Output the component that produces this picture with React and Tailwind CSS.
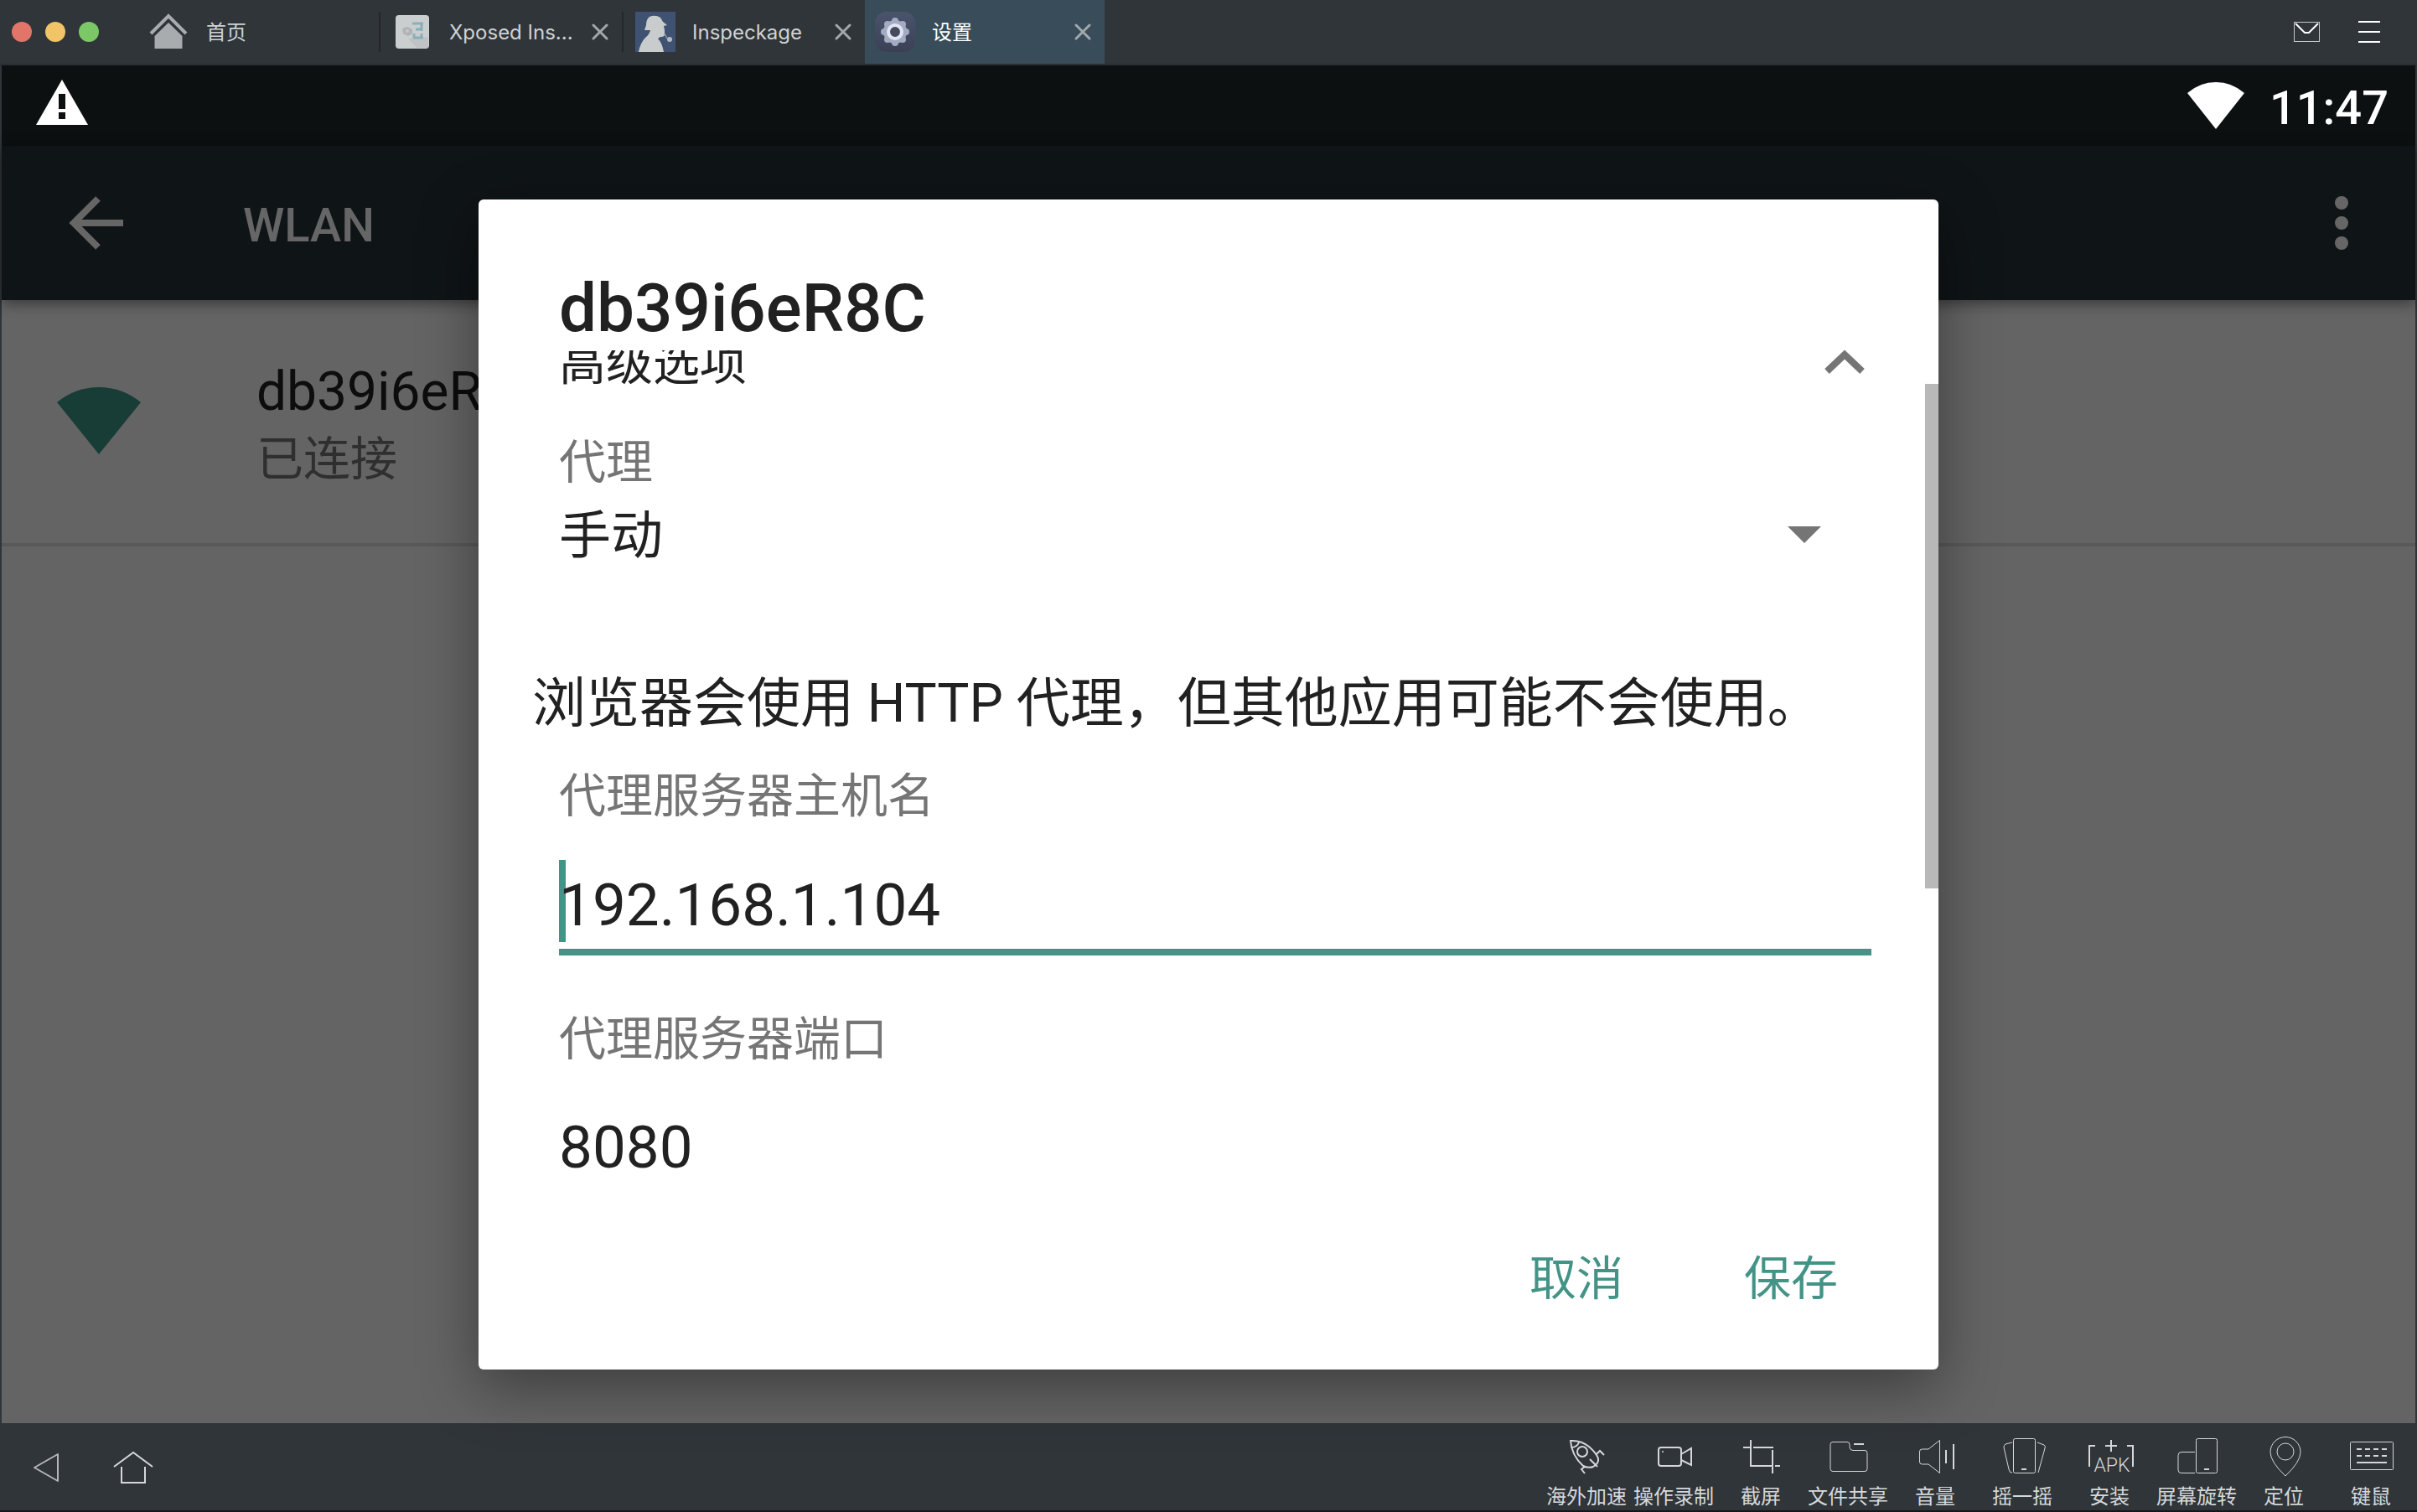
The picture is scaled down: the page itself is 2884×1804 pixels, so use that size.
import React, { useState } from "react";

const uiFont = "font-['Inter','Noto_Sans_CJK_SC',sans-serif]";
const androidFont = "font-['Roboto','Noto_Sans_CJK_SC',sans-serif]";

function CloseIcon() {
  return (
    <svg className="size-5" viewBox="0 0 20 20" fill="none" stroke="currentColor" strokeWidth="3" strokeLinecap="round">
      <path d="M2 2l16 16M18 2L2 18" />
    </svg>
  );
}

function XposedIcon() {
  return (
    <svg className="size-12" viewBox="0 0 48 48">
      <rect x="4" y="4" width="40" height="40" rx="4" fill="#cbcecf" />
      <path d="M19 32l10 11h14V30z" fill="#c0c3c5" />
      <path d="M24 14h13M35 14v9M28 21h8M26 26v6M25 31h12M35 26v6" fill="none" stroke="#88b0b8" strokeWidth="3" />
      <path d="M12 20l6-2 6 3v5l-5 3-6-3z" fill="#b0b3b5" />
      <circle cx="18" cy="23" r="2" fill="#c6c9ca" />
    </svg>
  );
}

function InspeckageIcon() {
  return (
    <svg className="size-12" viewBox="0 0 48 48">
      <rect width="48" height="48" fill="#405272" />
      <path
        d="M17 6q7-3 13 1l3 5 5 4-4 1 1 5v6q-1 2-5 2l-3 2q5 5 7 16H4q2-11 8-17 5-4 6-9h-7l2-6q0-7 4-10z"
        fill="#c9cccd"
      />
      <path d="M35 26l3 6" stroke="#8b95a4" strokeWidth="1.500" />
      <circle cx="41" cy="33" r="3" fill="#b4bac2" />
    </svg>
  );
}

function SettingsIcon() {
  return (
    <svg className="size-12" viewBox="0 0 48 48">
      <defs>
        <linearGradient id="settings-bg" x1="0" y1="0" x2="0" y2="1">
          <stop offset="0" stopColor="#49546d" />
          <stop offset="1" stopColor="#3c4054" />
        </linearGradient>
      </defs>
      <rect width="48" height="48" rx="14" fill="url(#settings-bg)" />
      <g fill="#a3abc4">
        <circle cx="24" cy="24" r="14" />
        <circle cx="24" cy="11" r="4" />
        <circle cx="24" cy="37" r="4" />
        <circle cx="11" cy="24" r="4" />
        <circle cx="37" cy="24" r="4" />
        <circle cx="15" cy="15" r="4" />
        <circle cx="33" cy="15" r="4" />
        <circle cx="15" cy="33" r="4" />
        <circle cx="33" cy="33" r="4" />
      </g>
      <circle cx="24" cy="24" r="8" fill="#454a60" stroke="#e1e5f0" strokeWidth="4" />
    </svg>
  );
}

function Tab({ icon, label, active }) {
  return (
    <div className={`flex items-center ${active ? "w-[286px] bg-[#384d59] text-white" : "w-[290px] text-[#cfd2d4]"}`}>
      {!active && <div className="h-12 w-0.5 bg-[#23272b]" />}
      <button
        type="button"
        className={`flex flex-1 items-center gap-5 text-left whitespace-nowrap ${active ? "ml-3" : "ml-3.5"}`}
      >
        {icon}
        <span className="pt-0.5">{label}</span>
      </button>
      <button type="button" aria-label={`关闭 ${label}`} className="mr-4 text-[#a3a8ac]">
        <CloseIcon />
      </button>
    </div>
  );
}

function TitleBar() {
  return (
    <header className={`flex h-[78px] items-stretch border-b-2 border-[#2b2f33] bg-[#303539] text-2xl ${uiFont}`}>
      <div className="flex w-[164px] items-center gap-4 pl-3.5">
        <button type="button" aria-label="关闭窗口" className="size-6 rounded-full bg-[#e2756a]" />
        <button type="button" aria-label="最小化" className="size-6 rounded-full bg-[#f1c467]" />
        <button type="button" aria-label="最大化" className="size-6 rounded-full bg-[#7cc867]" />
      </div>
      <button type="button" className="flex w-[288px] items-center gap-5 pl-3 text-[#cfd2d4]">
        <svg className="size-[50px]" viewBox="0 0 50 50">
          <path d="M4 27L25 6l21 21" fill="none" stroke="#a9acae" strokeWidth="4" />
          <path d="M25 14L41.500 30V45h-33V30z" fill="#a9acae" />
        </svg>
        <span className="pt-0.5">首页</span>
      </button>
      <Tab icon={<XposedIcon />} label="Xposed Ins..." />
      <Tab icon={<InspeckageIcon />} label="Inspeckage" />
      <Tab active icon={<SettingsIcon />} label="设置" />
      <div className="ml-auto flex items-center gap-[46px] pr-11">
        <button type="button" aria-label="消息">
          <svg className="h-6 w-[31px]" viewBox="0 0 31 24" fill="none">
            <rect x="0.500" y="0.500" width="30" height="23" stroke="#c3c7ca" />
            <path d="M2 2l11 11h5L29 2" stroke="#fff" strokeWidth="2" />
          </svg>
        </button>
        <button type="button" aria-label="菜单">
          <svg className="size-[26px]" viewBox="0 0 26 26" stroke="#fff" strokeWidth="2">
            <path d="M0 1h26M0 13h26M0 25h26" />
          </svg>
        </button>
      </div>
    </header>
  );
}

function StatusBar() {
  return (
    <div className="flex h-24 items-center bg-[#0c1011] pr-8 pl-10 text-white">
      <svg className="mb-2 h-[54px] w-16" viewBox="0 0 64 54">
        <path d="M32 0l31 54H1z" fill="#fff" />
        <path d="M28 17h8v18h-8zM28 39h8v8h-8z" fill="#0c1011" />
      </svg>
      <svg className="mr-[30px] ml-auto h-14 w-[68px]" viewBox="0 0 68 56">
        <path d="M0 13Q15 0 34 0t34 13L34 56z" fill="#fff" />
      </svg>
      <span className="mt-1.5 text-[56px] leading-16 font-medium">11:47</span>
    </div>
  );
}

function WlanPage() {
  return (
    <>
      <div className="relative flex h-[184px] items-center bg-[#263238] pr-20 pl-[78px] text-white shadow-[0_4px_16px_rgba(0,0,0,0.45)]">
        <button type="button" aria-label="返回">
          <svg className="size-[72px]" viewBox="0 0 72 72" fill="none" stroke="currentColor" strokeWidth="8">
            <path d="M37 7L8 36l29 29M7 36h60" />
          </svg>
        </button>
        <h1 className="ml-[138px] pt-1.5 text-[56px] leading-16 font-medium">WLAN</h1>
        <button type="button" aria-label="更多选项" className="ml-auto">
          <svg className="h-16 w-4" viewBox="0 0 16 64" fill="currentColor">
            <circle cx="8" cy="8" r="8" />
            <circle cx="8" cy="32" r="8" />
            <circle cx="8" cy="56" r="8" />
          </svg>
        </button>
      </div>
      <div className="flex h-[294px] items-start border-b-4 border-[#dedede] pt-[70px] pl-[66px]">
        <svg className="mt-[34px] h-20 w-[100px]" viewBox="0 0 100 80">
          <path d="M0 18Q22 0 50 0t50 18L50 80z" fill="#3c9688" />
        </svg>
        <div className="ml-[138px]">
          <p className="text-[64px] leading-20 text-[#212121]">db39i6eR8C</p>
          <p className="text-[56px] leading-20 text-[#757575]">已连接</p>
        </div>
      </div>
    </>
  );
}

function ProxyDialog() {
  const [mode, setMode] = useState("manual");
  const [host, setHost] = useState("192.168.1.104");
  const [port, setPort] = useState("8080");
  const label = "block text-[56px] leading-16 text-[#757575]";
  return (
    <div
      role="dialog"
      aria-labelledby="dialog-title"
      className="w-full max-w-[1742px] rounded-md bg-white pt-20 text-[#212121] shadow-[0_20px_70px_rgba(0,0,0,0.4)]"
    >
      <h2 id="dialog-title" className="px-24 text-[80px] leading-[100px] font-medium">
        db39i6eR8C
      </h2>
      <form id="proxy-form" className="relative overflow-hidden pr-20 pl-24">
        <button type="button" className="-mt-4 flex w-full items-center justify-between text-[56px] leading-16">
          <span>高级选项</span>
          <svg className="mr-2 mb-1 h-7 w-12" viewBox="0 0 48 28" fill="none" stroke="#757575" strokeWidth="8">
            <path d="M3 25L24 5l21 20" />
          </svg>
        </button>
        <label htmlFor="proxy-mode" className={`mt-[54px] ${label}`}>
          代理
        </label>
        <div className="relative mt-4">
          <select
            id="proxy-mode"
            value={mode}
            onChange={(e) => setMode(e.target.value)}
            className="block h-20 w-full appearance-none bg-transparent text-[62px] leading-20 outline-none"
          >
            <option value="manual">手动</option>
            <option value="none">无</option>
          </select>
          <svg className="pointer-events-none absolute top-7 right-[60px] h-5 w-10" viewBox="0 0 40 20">
            <path d="M0 0h40L20 20z" fill="#757575" />
          </svg>
        </div>
        <p className="mt-30 -ml-8 text-[64px] leading-20">浏览器会使用 HTTP 代理，但其他应用可能不会使用。</p>
        <label htmlFor="proxy-host" className={`mt-[38px] ${label}`}>
          代理服务器主机名
        </label>
        <div className="relative mt-11">
          <div className="absolute top-0 left-0 h-[98px] w-2 bg-[#439386]" />
          <input
            id="proxy-host"
            value={host}
            onChange={(e) => setHost(e.target.value)}
            className="relative block h-[114px] w-full border-b-8 border-[#439386] bg-transparent text-[71px] outline-none"
          />
        </div>
        <label htmlFor="proxy-port" className={`mt-[68px] ${label}`}>
          代理服务器端口
        </label>
        <input
          id="proxy-port"
          value={port}
          onChange={(e) => setPort(e.target.value)}
          className="mt-11 block h-[106px] w-full bg-transparent text-[71px] outline-none"
        />
        <div className="absolute top-10 right-0 h-[602px] w-4 bg-[#b8b8b8]" />
      </form>
      <div className="flex h-[212px] items-center justify-end gap-16 pr-20 pb-1 text-[56px] leading-20 text-[#439386]">
        <button type="button" className="px-10">
          取消
        </button>
        <button type="submit" form="proxy-form" className="px-10">
          保存
        </button>
      </div>
    </div>
  );
}

const tools = [
  {
    label: "海外加速",
    icon: (
      <g strokeWidth="2">
        <path d="M13 5q12-1 22 7 9 8 11 14 1 6-6 10-6 2-12-1Q14 22 13 5zM15 13q6-1 8-6" />
        <circle cx="27" cy="18" r="6" />
        <path d="M44 21l4-4 5 5M30 36l-4 3 4 5M36 27l9 9" />
      </g>
    ),
  },
  {
    label: "操作录制",
    icon: (
      <g strokeWidth="2">
        <rect x="14" y="13" width="27" height="22" rx="3" />
        <path d="M41 21l12-7v20l-12-6" />
        <circle cx="19" cy="18" r="1" fill="currentColor" stroke="none" />
      </g>
    ),
  },
  { label: "截屏", icon: <path strokeWidth="2" d="M20 4v31h27M49 35h6M11 13h8M23 13h24M46 16v28" /> },
  {
    label: "文件共享",
    icon: (
      <>
        <path d="M14 6.500h17q3 0 3 3v3q0 4 4 4h14q3 0 3 3v19q0 3-3 3H14q-3 0-3-3v-29q0-3 3-3z" />
        <path strokeWidth="2" d="M39 9h12" />
      </>
    ),
  },
  {
    label: "音量",
    icon: (
      <>
        <path d="M13.500 18q0-3 3-3H24L37.500 4.500v39L24 33h-7.500q-3 0-3-3z" />
        <path strokeWidth="2" d="M45 16v16M54 9v30" />
      </>
    ),
  },
  {
    label: "摇一摇",
    icon: (
      <>
        <rect x="21.500" y="2.500" width="26" height="41" rx="2" />
        <path d="M20 7l-8 2q-2 1-2 4l6 26q1 5 4 4M50 7l8 3q2 1 1 4l-8 29" />
        <path strokeWidth="2" d="M31 39h6" />
      </>
    ),
  },
  {
    label: "安装",
    icon: (
      <>
        <path strokeWidth="2" d="M15 11H8v25M53 11h7v25M27 11h14M34 4v14" />
        <text x="35" y="42" textAnchor="middle" className="font-['Roboto',sans-serif] text-[23px] font-light" fill="currentColor" stroke="none">
          APK
        </text>
      </>
    ),
  },
  {
    label: "屏幕旋转",
    icon: (
      <>
        <rect x="31.500" y="2.500" width="25" height="41" rx="2" />
        <path d="M30 18.500H14q-4 0-4 4V40q0 3.500 4 3.500h16" />
        <path strokeWidth="2" d="M41 39h6" />
      </>
    ),
  },
  {
    label: "定位",
    icon: (
      <>
        <path d="M34 47Q16 30 16 18.500a18 18 0 0 1 36 0Q52 30 34 47z" />
        <circle cx="34" cy="18" r="10" />
      </>
    ),
  },
  {
    label: "键鼠",
    icon: (
      <>
        <rect x="7.500" y="6.500" width="51" height="33" rx="1" />
        <path strokeWidth="2" strokeDasharray="6 4" d="M15 15h36M15 23h36" />
        <path strokeWidth="2" d="M15 31h36" />
      </>
    ),
  },
];

function BottomBar() {
  return (
    <footer className={`flex items-stretch border-b-2 border-[#15161a] bg-[#303539] text-[#d5d8da] ${uiFont}`}>
      <button type="button" aria-label="后退" className="ml-[38px] pt-0.5">
        <svg className="h-9 w-8" viewBox="0 0 32 36" fill="none" stroke="#b4b7b9" strokeWidth="2" strokeLinejoin="round">
          <path d="M31 2v32L3 18z" />
        </svg>
      </button>
      <button type="button" aria-label="主屏幕" className="ml-[65px] pt-0.5">
        <svg className="h-10 w-12" viewBox="0 0 48 40" fill="none" stroke="currentColor" strokeWidth="2">
          <path d="M1 19L24 2l23 17M10 19v19h28V19" />
        </svg>
      </button>
      <nav className="ml-auto flex pr-[3px]">
        {tools.map((tool) => (
          <button key={tool.label} type="button" className="flex w-26 flex-col items-center pt-4">
            <svg className="h-12 w-16" viewBox="0 0 64 48" fill="none" stroke="currentColor">
              {tool.icon}
            </svg>
            <span className="mt-2 text-2xl leading-8 whitespace-nowrap">{tool.label}</span>
          </button>
        ))}
      </nav>
    </footer>
  );
}

export default function App() {
  return (
    <div className="flex min-h-screen flex-col bg-[#303539]">
      <TitleBar />
      <main className={`mx-0.5 flex flex-1 flex-col ${androidFont}`}>
        <StatusBar />
        <section className="relative flex-1 bg-[#fafafa]">
          <WlanPage />
          <div className="absolute inset-0 flex items-center justify-center bg-black/60">
            <ProxyDialog />
          </div>
        </section>
      </main>
      <BottomBar />
    </div>
  );
}
